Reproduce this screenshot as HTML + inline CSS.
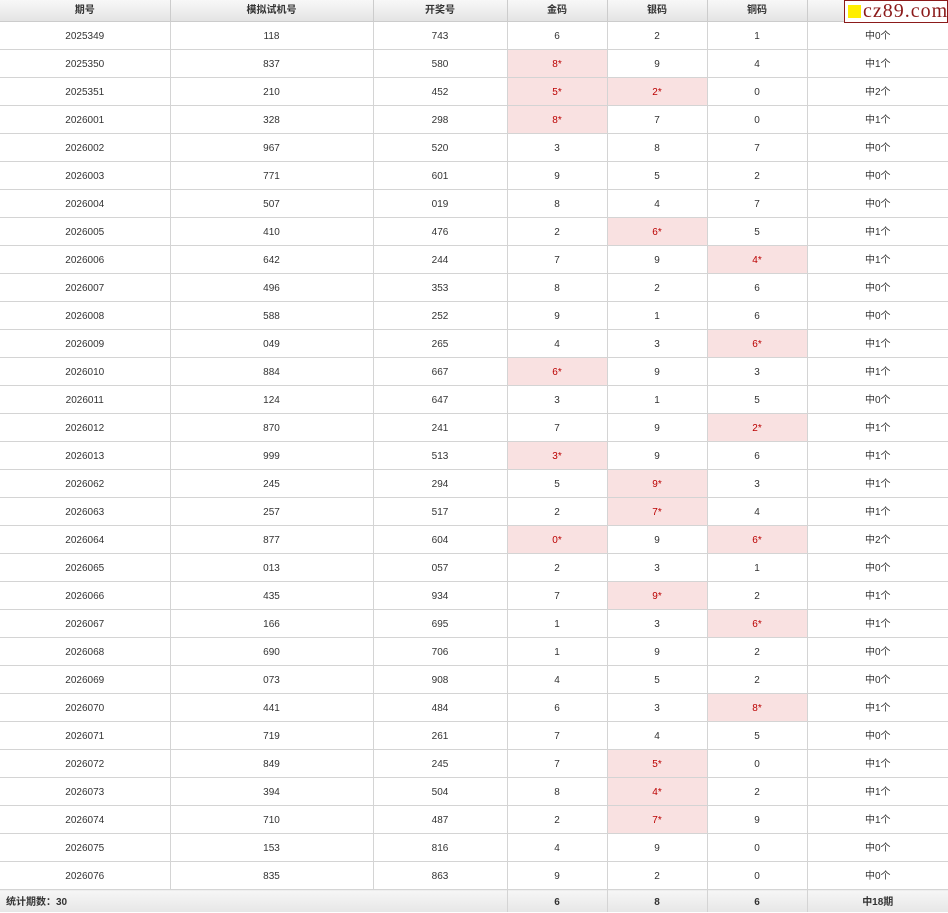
<!DOCTYPE html>
<html><head><meta charset="utf-8">
<style>
html,body{margin:0;padding:0;background:#fff;width:948px;height:913px;overflow:hidden}
body{font-family:"Liberation Sans","Noto Sans CJK SC",sans-serif;font-size:10px;color:#333;position:relative}
table{border-collapse:collapse;table-layout:fixed;width:948px}
td,th{border:1px solid #d4d4d4;text-align:center;padding:0;overflow:hidden;line-height:12px;vertical-align:middle}
th{height:21px;font-weight:bold;background:linear-gradient(#f8f8f8,#e4e4e4);color:#333;border-color:#ccc}
td{height:24px;padding-top:3px}
tr:first-child th{border-top:none}
td:first-child,th:first-child{border-left:none}
td:last-child,th:last-child{border-right:none}
td.h{background:#f9e1e1;color:#b00}
tfoot td{height:19px;padding-top:3px;font-weight:bold;background:linear-gradient(#f6f6f6,#e6e6e6);border-bottom:none}
tfoot td.l{text-align:left;padding-left:6px}
.logo{position:absolute;left:844px;top:0;width:102px;height:21px;border:1px solid #8b1a1a;background:#fff;font-family:"Liberation Serif",serif;font-size:20px;color:#8b1a1a;line-height:21px;letter-spacing:1px;white-space:nowrap;overflow:hidden}
.logo i{display:inline-block;width:13px;height:13px;background:#ffee00;margin:0 2px 0 3px;vertical-align:-1px}
</style></head><body>
<table>
<colgroup><col style="width:170px"><col style="width:203px"><col style="width:134px"><col style="width:100px"><col style="width:100px"><col style="width:100px"><col style="width:141px"></colgroup>
<thead><tr><th>期号</th><th>模拟试机号</th><th>开奖号</th><th>金码</th><th>银码</th><th>铜码</th><th></th></tr></thead>
<tbody>
<tr><td>2025349</td><td>118</td><td>743</td><td>6</td><td>2</td><td>1</td><td>中0个</td></tr>
<tr><td>2025350</td><td>837</td><td>580</td><td class="h">8*</td><td>9</td><td>4</td><td>中1个</td></tr>
<tr><td>2025351</td><td>210</td><td>452</td><td class="h">5*</td><td class="h">2*</td><td>0</td><td>中2个</td></tr>
<tr><td>2026001</td><td>328</td><td>298</td><td class="h">8*</td><td>7</td><td>0</td><td>中1个</td></tr>
<tr><td>2026002</td><td>967</td><td>520</td><td>3</td><td>8</td><td>7</td><td>中0个</td></tr>
<tr><td>2026003</td><td>771</td><td>601</td><td>9</td><td>5</td><td>2</td><td>中0个</td></tr>
<tr><td>2026004</td><td>507</td><td>019</td><td>8</td><td>4</td><td>7</td><td>中0个</td></tr>
<tr><td>2026005</td><td>410</td><td>476</td><td>2</td><td class="h">6*</td><td>5</td><td>中1个</td></tr>
<tr><td>2026006</td><td>642</td><td>244</td><td>7</td><td>9</td><td class="h">4*</td><td>中1个</td></tr>
<tr><td>2026007</td><td>496</td><td>353</td><td>8</td><td>2</td><td>6</td><td>中0个</td></tr>
<tr><td>2026008</td><td>588</td><td>252</td><td>9</td><td>1</td><td>6</td><td>中0个</td></tr>
<tr><td>2026009</td><td>049</td><td>265</td><td>4</td><td>3</td><td class="h">6*</td><td>中1个</td></tr>
<tr><td>2026010</td><td>884</td><td>667</td><td class="h">6*</td><td>9</td><td>3</td><td>中1个</td></tr>
<tr><td>2026011</td><td>124</td><td>647</td><td>3</td><td>1</td><td>5</td><td>中0个</td></tr>
<tr><td>2026012</td><td>870</td><td>241</td><td>7</td><td>9</td><td class="h">2*</td><td>中1个</td></tr>
<tr><td>2026013</td><td>999</td><td>513</td><td class="h">3*</td><td>9</td><td>6</td><td>中1个</td></tr>
<tr><td>2026062</td><td>245</td><td>294</td><td>5</td><td class="h">9*</td><td>3</td><td>中1个</td></tr>
<tr><td>2026063</td><td>257</td><td>517</td><td>2</td><td class="h">7*</td><td>4</td><td>中1个</td></tr>
<tr><td>2026064</td><td>877</td><td>604</td><td class="h">0*</td><td>9</td><td class="h">6*</td><td>中2个</td></tr>
<tr><td>2026065</td><td>013</td><td>057</td><td>2</td><td>3</td><td>1</td><td>中0个</td></tr>
<tr><td>2026066</td><td>435</td><td>934</td><td>7</td><td class="h">9*</td><td>2</td><td>中1个</td></tr>
<tr><td>2026067</td><td>166</td><td>695</td><td>1</td><td>3</td><td class="h">6*</td><td>中1个</td></tr>
<tr><td>2026068</td><td>690</td><td>706</td><td>1</td><td>9</td><td>2</td><td>中0个</td></tr>
<tr><td>2026069</td><td>073</td><td>908</td><td>4</td><td>5</td><td>2</td><td>中0个</td></tr>
<tr><td>2026070</td><td>441</td><td>484</td><td>6</td><td>3</td><td class="h">8*</td><td>中1个</td></tr>
<tr><td>2026071</td><td>719</td><td>261</td><td>7</td><td>4</td><td>5</td><td>中0个</td></tr>
<tr><td>2026072</td><td>849</td><td>245</td><td>7</td><td class="h">5*</td><td>0</td><td>中1个</td></tr>
<tr><td>2026073</td><td>394</td><td>504</td><td>8</td><td class="h">4*</td><td>2</td><td>中1个</td></tr>
<tr><td>2026074</td><td>710</td><td>487</td><td>2</td><td class="h">7*</td><td>9</td><td>中1个</td></tr>
<tr><td>2026075</td><td>153</td><td>816</td><td>4</td><td>9</td><td>0</td><td>中0个</td></tr>
<tr><td>2026076</td><td>835</td><td>863</td><td>9</td><td>2</td><td>0</td><td>中0个</td></tr>
</tbody>
<tfoot><tr><td colspan="3" class="l">统计期数：30</td><td>6</td><td>8</td><td>6</td><td>中18期</td></tr></tfoot>
</table>
<div class="logo"><i></i>cz89.com</div>
</body></html>
